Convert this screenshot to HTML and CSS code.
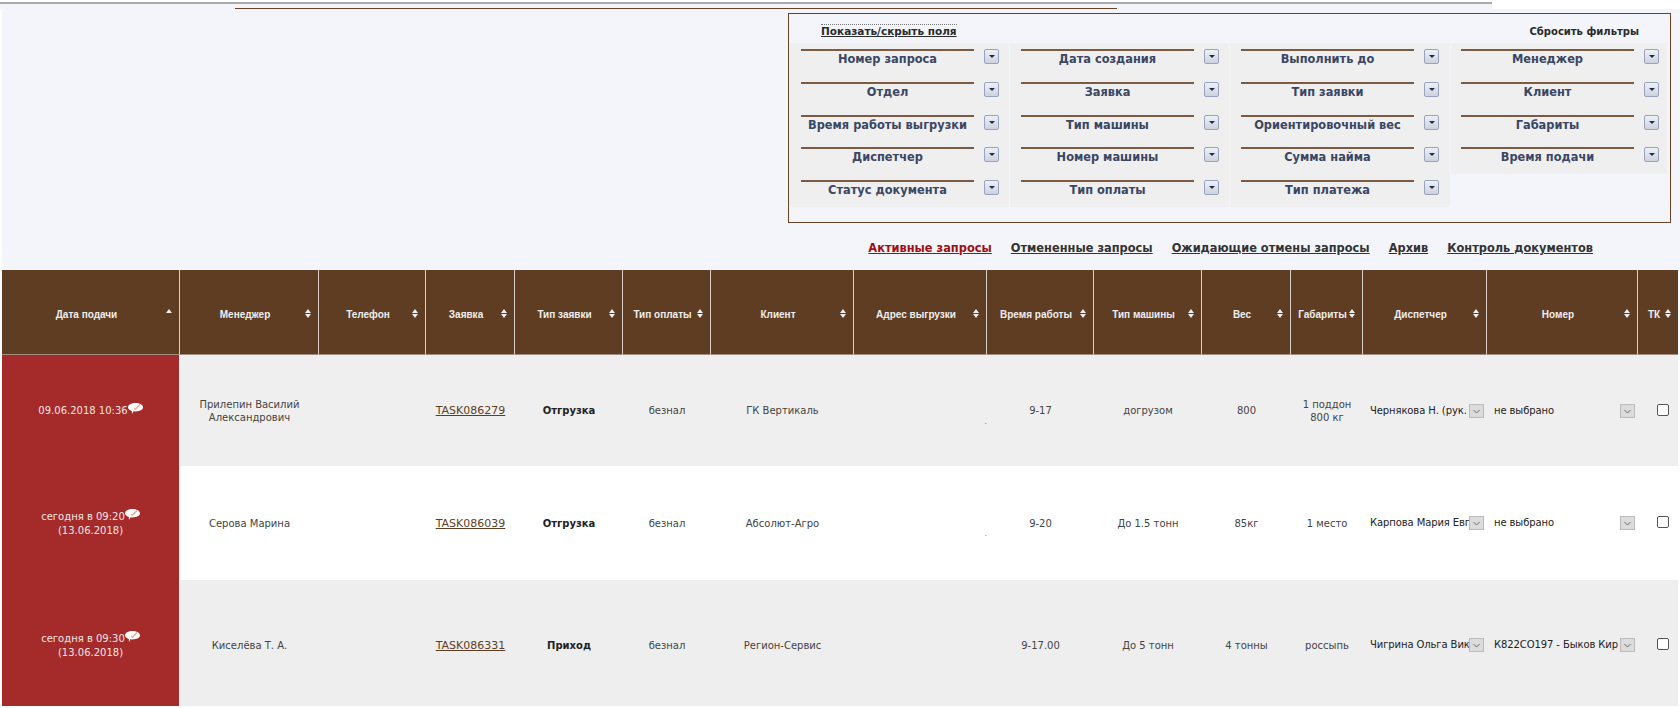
FILE: index.html
```html
<!DOCTYPE html>
<html lang="ru">
<head>
    <meta charset="UTF-8">
    <title>Запросы</title>
    <link rel="stylesheet" href="styles.css">
</head>
<body>
    <svg class="defs" width="0" height="0">
        <symbol id="bubble" viewBox="0 0 15 11">
            <path d="M7.5 0C11.6 0 15 1.8 15 4.3S11.6 8.400 7.500 8.400L5.500 8.300 4 11 3.800 7.900C1.500 7.300 0 5.900 0 4.300 0 1.800 3.400 0 7.500 0Z" fill="#fff"/>
            <path d="M6 5.500 7.500 6.200 12 1.500" fill="none" stroke="#e9a888" stroke-width="1.200"/>
        </symbol>
        <symbol id="chev" viewBox="0 0 13 12">
            <path d="M3.500 5 6.500 8 9.500 5" fill="none" stroke="#666" stroke-width="1"/>
        </symbol>
    </svg>

    <div class="top-band">
        <div class="top-rule"></div>
    </div>

    <div class="page">
        <div class="filters">
            <div class="filters-head">
                <a class="toggle-link">Показать/скрыть поля</a>
                <span class="reset-link">Сбросить фильтры</span>
            </div>
            <div class="filters-grid">
                <div class="filter"><div class="field">Номер запроса</div><span class="drop"></span></div>
                <div class="filter"><div class="field">Дата создания</div><span class="drop"></span></div>
                <div class="filter"><div class="field">Выполнить до</div><span class="drop"></span></div>
                <div class="filter"><div class="field">Менеджер</div><span class="drop"></span></div>
                <div class="filter"><div class="field">Отдел</div><span class="drop"></span></div>
                <div class="filter"><div class="field">Заявка</div><span class="drop"></span></div>
                <div class="filter"><div class="field">Тип заявки</div><span class="drop"></span></div>
                <div class="filter"><div class="field">Клиент</div><span class="drop"></span></div>
                <div class="filter"><div class="field">Время работы выгрузки</div><span class="drop"></span></div>
                <div class="filter"><div class="field">Тип машины</div><span class="drop"></span></div>
                <div class="filter"><div class="field">Ориентировочный вес</div><span class="drop"></span></div>
                <div class="filter"><div class="field">Габариты</div><span class="drop"></span></div>
                <div class="filter"><div class="field">Диспетчер</div><span class="drop"></span></div>
                <div class="filter"><div class="field">Номер машины</div><span class="drop"></span></div>
                <div class="filter"><div class="field">Сумма найма</div><span class="drop"></span></div>
                <div class="filter"><div class="field">Время подачи</div><span class="drop"></span></div>
                <div class="filter"><div class="field">Статус документа</div><span class="drop"></span></div>
                <div class="filter"><div class="field">Тип оплаты</div><span class="drop"></span></div>
                <div class="filter"><div class="field">Тип платежа</div><span class="drop"></span></div>
            </div>
        </div>

        <nav class="tabs">
            <a class="active">Активные запросы</a>
            <a>Отмененные запросы</a>
            <a>Ожидающие отмены запросы</a>
            <a>Архив</a>
            <a>Контроль документов</a>
        </nav>
    </div>

    <table class="orders">
        <colgroup>
            <col class="w178"><col class="w139"><col class="w107"><col class="w89"><col class="w108">
            <col class="w88"><col class="w143"><col class="w133"><col class="w107"><col class="w108">
            <col class="w89"><col class="w72"><col class="w124"><col class="w151"><col class="w40">
        </colgroup>
        <thead>
            <tr>
                <th class="sort-asc">Дата подачи</th>
                <th>Менеджер</th>
                <th>Телефон</th>
                <th>Заявка</th>
                <th>Тип заявки</th>
                <th>Тип оплаты</th>
                <th>Клиент</th>
                <th>Адрес выгрузки</th>
                <th>Время работы</th>
                <th>Тип машины</th>
                <th>Вес</th>
                <th class="tight">Габариты</th>
                <th>Диспетчер</th>
                <th>Номер</th>
                <th class="tight">ТК</th>
            </tr>
        </thead>
        <tbody>
            <tr class="row-one">
                <td class="date">09.06.2018 10:36<svg class="bubble"><use href="#bubble"/></svg></td>
                <td>Прилепин Василий<br>Александрович</td>
                <td></td>
                <td><a class="task">TASK086279</a></td>
                <td class="kind">Отгрузка</td>
                <td>безнал</td>
                <td>ГК Вертикаль</td>
                <td class="addr">.</td>
                <td>9-17</td>
                <td>догрузом</td>
                <td>800</td>
                <td>1 поддон<br>800 кг</td>
                <td class="pick-cell"><div class="pick"><span class="pick-text">Чернякова Н. (рук.</span><span class="pick-btn"><svg><use href="#chev"/></svg></span></div></td>
                <td class="pick-cell"><div class="pick"><span class="pick-text">не выбрано</span><span class="pick-btn"><svg><use href="#chev"/></svg></span></div></td>
                <td><input type="checkbox" class="check"></td>
            </tr>
            <tr class="row-two">
                <td class="date">сегодня в 09:20<svg class="bubble"><use href="#bubble"/></svg><br>(13.06.2018)</td>
                <td>Серова Марина</td>
                <td></td>
                <td><a class="task">TASK086039</a></td>
                <td class="kind">Отгрузка</td>
                <td>безнал</td>
                <td>Абсолют-Агро</td>
                <td class="addr">.</td>
                <td>9-20</td>
                <td>До 1.5 тонн</td>
                <td>85кг</td>
                <td>1 место</td>
                <td class="pick-cell"><div class="pick"><span class="pick-text">Карпова Мария Евг</span><span class="pick-btn"><svg><use href="#chev"/></svg></span></div></td>
                <td class="pick-cell"><div class="pick"><span class="pick-text">не выбрано</span><span class="pick-btn"><svg><use href="#chev"/></svg></span></div></td>
                <td><input type="checkbox" class="check"></td>
            </tr>
            <tr class="row-three">
                <td class="date">сегодня в 09:30<svg class="bubble"><use href="#bubble"/></svg><br>(13.06.2018)</td>
                <td>Киселёва Т. А.</td>
                <td></td>
                <td><a class="task">TASK086331</a></td>
                <td class="kind">Приход</td>
                <td>безнал</td>
                <td>Регион-Сервис</td>
                <td></td>
                <td>9-17.00</td>
                <td>До 5 тонн</td>
                <td>4 тонны</td>
                <td>россыпь</td>
                <td class="pick-cell"><div class="pick"><span class="pick-text">Чигрина Ольга Вик</span><span class="pick-btn"><svg><use href="#chev"/></svg></span></div></td>
                <td class="pick-cell"><div class="pick"><span class="pick-text">К822СО197 - Быков Кир</span><span class="pick-btn"><svg><use href="#chev"/></svg></span></div></td>
                <td><input type="checkbox" class="check"></td>
            </tr>
        </tbody>
    </table>
</body>
</html>
```

FILE: styles.css
```css
body { margin: 0; background: #fff; font-family: "DejaVu Sans", sans-serif; font-size: 10px; color: #444; }
.defs { position: absolute; }

/* top rules */
.top-band { width: 1492px; height: 5px; margin-top: 2px; background: #f3f5fa; border-top: 2px solid #aaa; }
.top-rule { height: 1.5px; margin: 3.5px 375px 0 235px; background: #6b4226; }

.page { box-sizing: border-box; height: 261px; padding-top: 4px; background: #f3f5fa; margin-left: 2px; }

/* filter panel */
.filters { box-sizing: border-box; width: 883px; height: 210px; margin-left: 786px; border: 1px solid #6b4226; padding-left: 1px; }
.filters-head { box-sizing: border-box; display: flex; justify-content: space-between; height: 29px; padding: 11px 31px 0 31px; font-weight: bold; line-height: 14px; color: #2b2b2b; }
.toggle-link { height: 13px; margin-top: -1px; border-top: 1px dotted #777; font-size: 10.5px; line-height: 12px; text-decoration: underline; }
.filters-grid { display: grid; grid-template-columns: 219px 219px 220px 216px; column-gap: 1px; grid-auto-rows: 32.8px; }
.filter { display: flex; align-items: flex-start; background: #efefef; padding: 6px 0 0 11px; }
.filter:nth-child(4n) { padding-left: 10px; }
.field { width: 173px; border-top: 2px solid #7d5b42; text-align: center; font-size: 11.4px; font-weight: bold; line-height: 17px; color: #3a4663; white-space: nowrap; }
.drop { box-sizing: border-box; width: 15px; height: 15px; margin-left: 10px; border: 1px solid #97a3bd; border-radius: 2px; background: linear-gradient(#eef1f7, #cdd2de); position: relative; }
.drop::after { content: ""; position: absolute; left: 4px; top: 5px; border-left: 3px solid transparent; border-right: 3px solid transparent; border-top: 3px solid #1f2a4d; }

/* tabs */
.tabs { box-sizing: border-box; display: flex; justify-content: flex-end; align-items: center; gap: 19px; height: 47px; padding: 3px 87px 0 0; font-size: 11.4px; font-weight: bold; }
.tabs a { color: #333; text-decoration: underline; }
.tabs .active { color: #a00f0f; }

/* table */
.orders { table-layout: fixed; width: 1676px; margin-left: 2px; border-collapse: separate; border-spacing: 0; }
.w178 { width: 178px; } .w139 { width: 139px; } .w107 { width: 107px; } .w89 { width: 89px; } .w108 { width: 108px; }
.w88 { width: 88px; } .w143 { width: 143px; } .w133 { width: 133px; } .w124 { width: 124px; } .w151 { width: 151px; }
.w72 { width: 72px; } .w40 { width: 40px; }

.orders th { box-sizing: border-box; height: 85px; padding: 4px 16px 0 8px; background: #5f3d23; color: #eee; font-family: "Liberation Sans", sans-serif; font-size: 10px; font-weight: bold; text-align: center; white-space: nowrap; border-right: 1px solid #d9d0c9; border-bottom: 1px solid #a08f82; position: relative; }
.orders th:last-child { border-right: 0; }
.orders th.tight { padding: 4px 13px 0 5px; }
.orders th::before, .orders th::after { content: ""; position: absolute; right: 7px; border-left: 3px solid transparent; border-right: 3px solid transparent; }
.orders th::before { top: 39px; border-bottom: 4px solid #eee; }
.orders th::after { top: 44px; border-top: 4px solid #eee; }
.orders th.sort-asc::after { display: none; }

.orders td { box-sizing: border-box; padding: 0 4px; text-align: center; line-height: 13px; vertical-align: middle; }
.row-one td { height: 111px; background: #f0efef; }
.row-two td { height: 114px; background: #fff; }
.orders .row-three td { height: 126px; padding-top: 4px; background: #eee; }
.orders td.date { background: #a52a2a; color: #f4e6e6; line-height: 13.5px; border-right: 1px solid #f6f0f0; }
.bubble { width: 15px; height: 11px; vertical-align: 0; }
.task { font-size: 11px; color: #5f3d23; text-decoration: underline; }
.orders td.kind { font-weight: bold; color: #222; }
.orders td.addr { padding: 22px 0 0 0; text-align: right; color: #777; font-size: 8px; line-height: 8px; }

.orders td.pick-cell { padding: 0 3px 0 7px; text-align: left; }
.orders .row-three td.pick-cell { padding: 4px 3px 0 7px; }
.pick { display: flex; color: #222; line-height: 14px; }
.pick-text { flex: 1; overflow: hidden; white-space: nowrap; letter-spacing: -0.1px; }
.pick-btn { flex: none; box-sizing: border-box; width: 15px; height: 14px; background: #dcdcdc; border: 1px solid #bbb; }
.pick-btn svg { display: block; width: 13px; height: 12px; }

.check { appearance: none; display: block; width: 12px; height: 12px; margin: 0 0 2px 15px; background: #fff; border: 1px solid #555; border-radius: 2px; box-sizing: border-box; }
```
